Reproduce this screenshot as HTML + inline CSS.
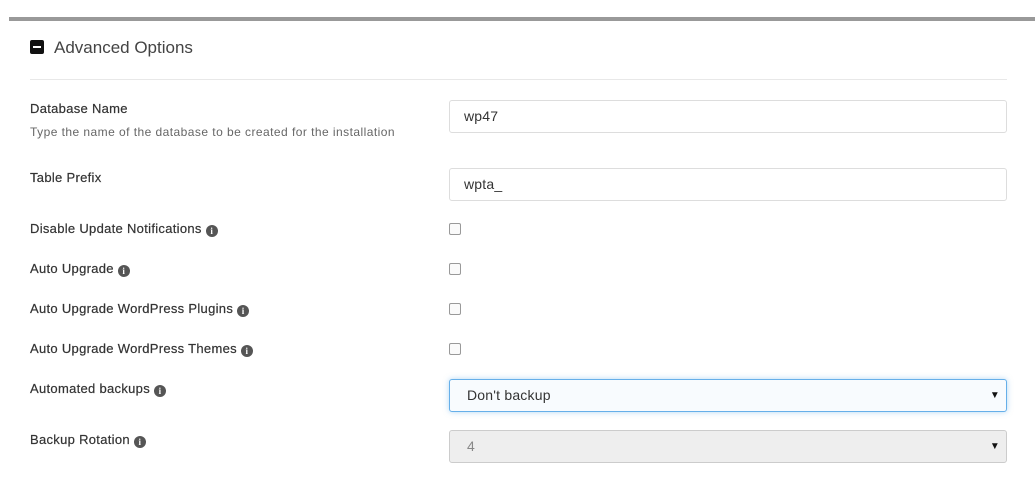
<!DOCTYPE html>
<html><head><style>
body{margin:0;width:1035px;height:488px;background:#fff;font-family:"Liberation Sans",sans-serif;position:relative;overflow:hidden}
.bar{position:absolute;left:9px;top:17px;width:1026px;height:4px;background:#999}
.a{position:absolute}
.lbl{position:absolute;left:30px;font-size:13px;color:#333;line-height:16px;white-space:nowrap;letter-spacing:0.3px;-webkit-text-stroke:0.2px #333}
.i{display:inline-block;width:12px;height:12px;border-radius:50%;background:#555;color:#fff;font:bold 9px/12px "Liberation Serif",serif;text-align:center;vertical-align:-1px;margin-left:4px;-webkit-text-stroke:0}
.inp{position:absolute;left:449px;width:556px;height:31px;border:1px solid #ddd;border-radius:3px;font-size:14px;color:#333;line-height:31px;box-sizing:content-box;letter-spacing:0.2px}
.cb{position:absolute;left:449px;top:0;width:10px;height:10px;border:1px solid #999;border-radius:2px;background:#fafafa}
.arr{position:absolute;right:6px;top:0;font-size:10px;color:#111}
</style></head><body>
<div class="bar"></div>
<div class="a" style="left:30px;top:40px;width:14px;height:14px;background:#111;border-radius:2px"><div style="position:absolute;left:3px;top:6px;width:8px;height:2px;background:#fff"></div></div>
<div class="a" style="left:54px;top:38px;font-size:17px;color:#444;line-height:20px">Advanced Options</div>
<div class="a" style="left:30px;top:79px;width:977px;height:1px;background:#e8e8e8"></div>

<div class="lbl" style="top:101px">Database Name</div>
<div class="lbl" style="top:124px;font-size:12px;color:#666;letter-spacing:0.45px;-webkit-text-stroke:0">Type the name of the database to be created for the installation</div>
<div class="inp" style="top:100px"><span style="margin-left:14px">wp47</span></div>

<div class="lbl" style="top:170px">Table Prefix</div>
<div class="inp" style="top:168px"><span style="margin-left:14px">wpta_</span></div>

<div class="lbl" style="top:221px">Disable Update Notifications<span class="i">i</span></div>
<div class="cb" style="top:223px"></div>
<div class="lbl" style="top:261px">Auto Upgrade<span class="i">i</span></div>
<div class="cb" style="top:263px"></div>
<div class="lbl" style="top:301px">Auto Upgrade WordPress Plugins<span class="i">i</span></div>
<div class="cb" style="top:303px"></div>
<div class="lbl" style="top:341px">Auto Upgrade WordPress Themes<span class="i">i</span></div>
<div class="cb" style="top:343px"></div>

<div class="lbl" style="top:381px">Automated backups<span class="i">i</span></div>
<div class="inp" style="top:379px;border-color:#66afe9;background:#f8fbfe;box-shadow:0 0 6px rgba(102,175,233,.5)"><span style="margin-left:17px">Don't backup</span><span class="arr">▼</span></div>

<div class="lbl" style="top:432px">Backup Rotation<span class="i">i</span></div>
<div class="inp" style="top:430px;background:#eee;border-color:#ccc;color:#888"><span style="margin-left:17px">4</span><span class="arr">▼</span></div>
</body></html>
